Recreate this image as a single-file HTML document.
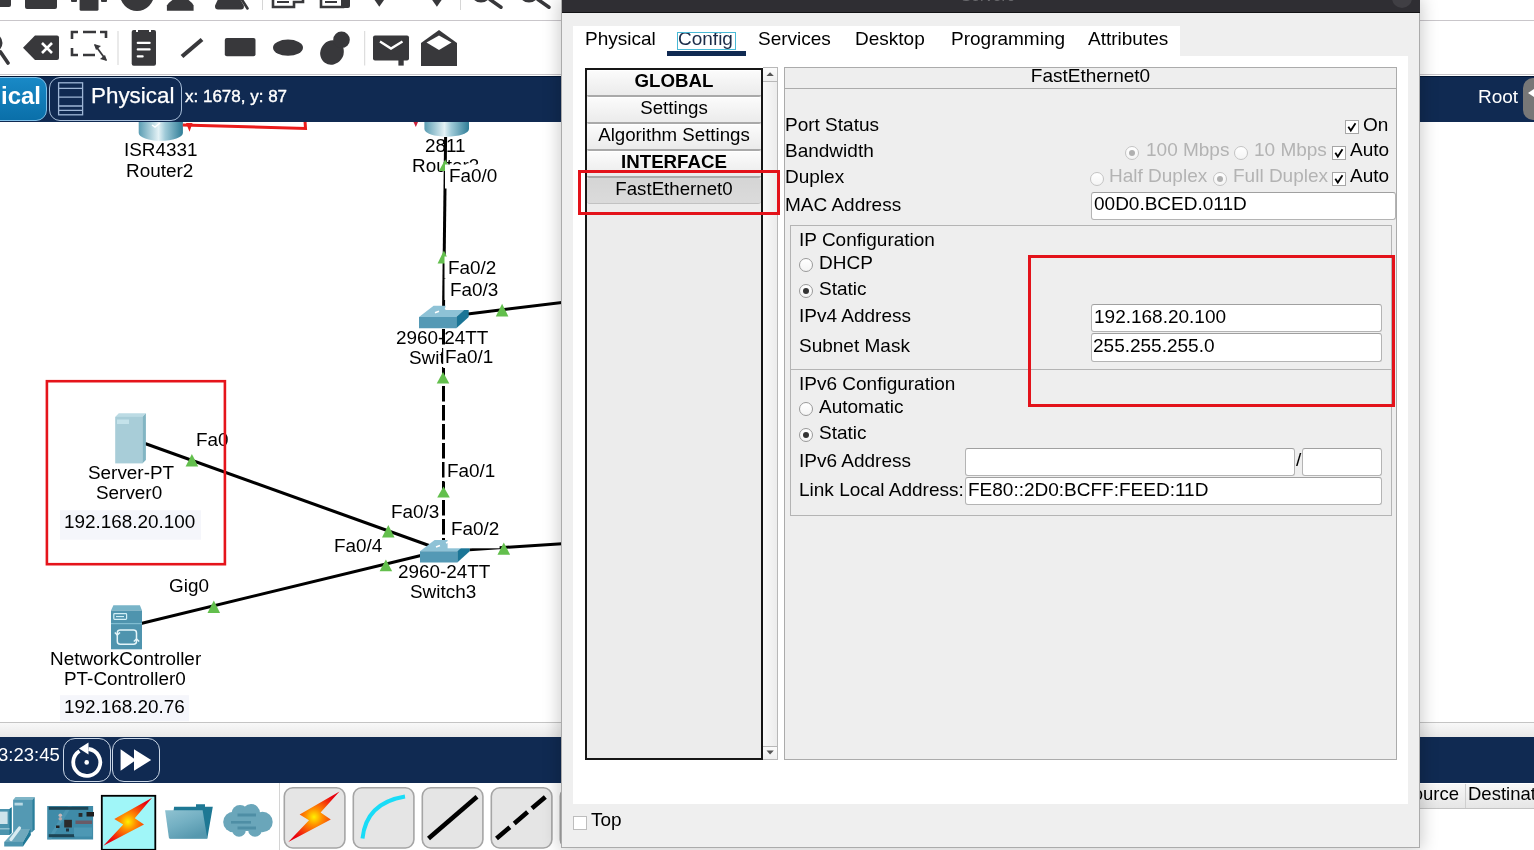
<!DOCTYPE html>
<html><head><meta charset="utf-8">
<style>
*{box-sizing:border-box}
html,body{margin:0;padding:0}
body{width:1534px;height:850px;overflow:hidden;position:relative;background:#fff;font-family:"Liberation Sans",sans-serif;color:#000}
.a{position:absolute}
.t{position:absolute;white-space:pre;line-height:1;will-change:transform}
</style></head><body>
<div class="a" style="left:0px;top:20px;width:1534px;height:1px;background:#c9c6ca"></div>
<div class="a" style="left:0px;top:74px;width:1534px;height:1px;background:#c9c6ca"></div>
<div class="a" style="left:0px;top:76px;width:1534px;height:46px;background:#102a52;border-top:1px solid #021634"></div>
<div class="a" style="left:0px;top:722px;width:1534px;height:1px;background:#c4c4c4"></div>
<div class="a" style="left:0px;top:723px;width:1534px;height:14px;background:linear-gradient(#f8f8f8,#e9e9e9)"></div>
<div class="a" style="left:0px;top:737px;width:1534px;height:46px;background:#102a52"></div>
<svg class="a" style="left:0;top:0" width="562" height="76" viewBox="0 0 562 76"><rect x="-4" y="-6" width="15" height="13" rx="2" fill="#38383b"/><rect x="25" y="-6" width="32" height="15" rx="2" fill="#38383b"/><rect x="79.6" y="-6" width="18.9" height="16.7" rx="1.5" fill="#38383b"/><rect x="71" y="-3" width="6" height="5" rx="1" fill="#38383b"/><rect x="101" y="-3" width="6" height="5" rx="1" fill="#38383b"/><circle cx="137" cy="-6" r="17" fill="#38383b"/><rect x="135" y="-6" width="3" height="4" fill="#fff"/><path d="M174 -1 H187 Q192 2 193.6 5.5 V10.7 H166.9 V5.5 Q169 2 174 -1 Z" fill="#38383b"/><path d="M219 -3 H239 L243.8 5.5 Q244.5 9.4 241 9.4 H218 Q214.5 9.4 215.1 5.5 Z" fill="#38383b"/><path d="M241.5 -1 L247.5 8.5" stroke="#38383b" stroke-width="2.6" stroke-linecap="round"/><rect x="262" y="-2" width="1" height="12" fill="#d6d6d6"/><path d="M273 -4 V7 H294 V2 H303 V-4" fill="none" stroke="#38383b" stroke-width="2.6"/><rect x="277" y="1" width="12" height="2" fill="#38383b"/><path d="M321 -4 V7 H343 V-4" fill="none" stroke="#38383b" stroke-width="2.6"/><rect x="341" y="-4" width="9" height="12" rx="2" fill="#38383b"/><rect x="325" y="1" width="12" height="2" fill="#38383b"/><path d="M373.2 -2 L385.4 -2 L379.3 6.8 Z" fill="#38383b"/><path d="M430.8 -2 L443 -2 L436.9 6.8 Z" fill="#38383b"/><rect x="460" y="-2" width="1" height="12" fill="#d6d6d6"/><path d="M490 -0.5 L501 7.2" stroke="#38383b" stroke-width="3.5" stroke-linecap="round"/><circle cx="481" cy="-8" r="9" stroke="#38383b" stroke-width="3" fill="none"/><path d="M538 -0.5 L549 7.2" stroke="#38383b" stroke-width="3.5" stroke-linecap="round"/><circle cx="529" cy="-8" r="9" stroke="#38383b" stroke-width="3" fill="none"/><circle cx="-7" cy="43" r="8" fill="none" stroke="#38383b" stroke-width="3"/><path d="M0.5 52 L8 63" stroke="#38383b" stroke-width="3.6" stroke-linecap="round"/><path d="M23 47.8 L35 35.6 H57 Q59 35.6 59 37.6 V58 Q59 60 57 60 H35 Z" fill="#38383b"/><path d="M42 43 L52 53 M52 43 L42 53" stroke="#fff" stroke-width="2.6"/><path d="M72 39 V32 H78 M83 32 H96 M100 32 H106 V38 M72 48 V55 H78 M83 55 H95" fill="none" stroke="#38383b" stroke-width="2.6"/><path d="M95 45 L106 60" stroke="#38383b" stroke-width="1.8"/><path d="M94 44 L101 46 L96 50 Z M107 61 L100 59 L105 55 Z" fill="#38383b"/><rect x="117.5" y="31" width="1" height="34" fill="#d6d6d6"/><rect x="131.7" y="30" width="24.3" height="35.8" rx="2" fill="#38383b"/><rect x="136" y="29" width="2" height="3" fill="#fff"/><rect x="149" y="29" width="2" height="3" fill="#fff"/><rect x="136.7" y="41.8" width="14" height="2.2" rx="1" fill="#fff"/><rect x="136.7" y="48.2" width="14" height="2.2" rx="1" fill="#fff"/><rect x="136.7" y="55.3" width="7" height="2.2" rx="1" fill="#fff"/><path d="M182 56.5 L202 39.5" stroke="#38383b" stroke-width="4.2" stroke-linecap="butt"/><rect x="224.8" y="38" width="30.7" height="18.2" rx="2" fill="#38383b"/><ellipse cx="288" cy="47.7" rx="15" ry="8.1" fill="#38383b"/><ellipse cx="332" cy="52.5" rx="11.5" ry="12.5" transform="rotate(35 332 52.5)" fill="#38383b"/><circle cx="341.5" cy="39.8" r="8.3" fill="#38383b"/><rect x="364.2" y="31" width="1" height="34.5" fill="#d6d6d6"/><rect x="373" y="35.6" width="36" height="25" rx="2" fill="#38383b"/><rect x="398.4" y="59" width="5.3" height="6.6" fill="#38383b"/><path d="M380 41.5 L391 48.5 L402.5 41.5" fill="none" stroke="#fff" stroke-width="2.4"/><path d="M421 43 L439 30 L457 43 V66 H421 Z" fill="#38383b"/><path d="M426.5 42.5 L439 35.5 L451.5 42.5 L439 50 Z" fill="#fff"/></svg>
<div class="a" style="left:-14px;top:77px;width:61px;height:44px;border:1px solid #7fc0e8;border-radius:11px;background:linear-gradient(#1989c6,#0a6fa9)"></div>
<div class="t" style="left:0.6px;top:84.08px;font-size:24px;font-weight:bold;color:#fff;">ical</div>
<div class="a" style="left:49px;top:77px;width:133px;height:44px;border:1px solid #a9bfd9;border-radius:11px"></div>
<svg class="a" style="left:57px;top:81px" width="28" height="36" viewBox="57 81 28 36"><g fill="none" stroke="#9eb6d6" stroke-width="1.3"><rect x="58.6" y="82.8" width="24" height="32"/><path d="M58.6 88.4H82.6M58.6 97.1H82.6M58.6 106H82.6M58.6 110.4H82.6"/></g></svg>
<div class="t" style="left:90.6px;top:85.24px;font-size:22.4px;font-weight:normal;color:#fff;-webkit-text-stroke:0.25px #fff">Physical</div>
<div class="t" style="left:184.7px;top:88.21px;font-size:17px;font-weight:normal;color:#fff;-webkit-text-stroke:0.4px #fff">x: 1678, y: 87</div>
<div class="t" style="left:1478.4px;top:87.22px;font-size:19px;font-weight:normal;color:#fff;">Root</div>
<div class="a" style="left:1523px;top:78px;width:27px;height:42px;background:#777;border-radius:10px"></div>
<svg class="a" style="left:1526px;top:80px" width="8" height="24"><path d="M2 13 L14 5 V21 Z" fill="#fff"/></svg>
<div class="t" style="left:-1.6px;top:745.74px;font-size:18.5px;font-weight:normal;color:#fff;">3:23:45</div>
<div class="a" style="left:63px;top:738px;width:48px;height:44px;border:1px solid #c9d6e6;border-radius:12px"></div>
<div class="a" style="left:112px;top:738px;width:48px;height:44px;border:1px solid #c9d6e6;border-radius:12px"></div>
<svg class="a" style="left:63px;top:738px" width="100" height="44" viewBox="63 738 100 44"><path d="M79.5 751 A13.5 13.5 0 1 0 88.5 749" fill="none" stroke="#fff" stroke-width="3.8"/><path d="M88.5 742.5 L79 748.5 L88.5 754.5 Z" fill="#fff"/><circle cx="86.7" cy="762.4" r="2.3" fill="#fff"/><path d="M120.6 749.3 L136 760 L120.6 770.8 Z M134 749.3 L151.2 760 L134 770.8 Z" fill="#fff"/></svg>
<div class="t" style="left:123.9px;top:141.40px;font-size:18.9px;font-weight:normal;color:#000;">ISR4331</div>
<div class="t" style="left:126.4px;top:161.50px;font-size:18.9px;font-weight:normal;color:#000;">Router2</div>
<div class="t" style="left:424.7px;top:137.10px;font-size:18.9px;font-weight:normal;color:#000;">2811</div>
<div class="t" style="left:412.4px;top:157.10px;font-size:18.9px;font-weight:normal;color:#000;">Router3</div>
<div class="t" style="left:396.2px;top:329.30px;font-size:18.9px;font-weight:normal;color:#000;">2960-24TT</div>
<div class="t" style="left:408.6px;top:348.80px;font-size:18.9px;font-weight:normal;color:#000;">Switch1</div>
<div class="t" style="left:397.7px;top:563.10px;font-size:18.9px;font-weight:normal;color:#000;">2960-24TT</div>
<div class="t" style="left:409.6px;top:583.10px;font-size:18.9px;font-weight:normal;color:#000;">Switch3</div>
<div class="t" style="left:87.7px;top:464.00px;font-size:18.9px;font-weight:normal;color:#000;">Server-PT</div>
<div class="t" style="left:95.9px;top:484.00px;font-size:18.9px;font-weight:normal;color:#000;">Server0</div>
<div class="t" style="left:49.9px;top:650.30px;font-size:18.9px;font-weight:normal;color:#000;">NetworkController</div>
<div class="t" style="left:64.4px;top:670.20px;font-size:18.9px;font-weight:normal;color:#000;">PT-Controller0</div>
<svg class="a" style="left:0;top:122px" width="562" height="600" viewBox="0 122 562 600"><defs><linearGradient id="cyl" x1="0" x2="1" y1="0" y2="0"><stop offset="0" stop-color="#5a9db3"/><stop offset="0.45" stop-color="#e4f2f6"/><stop offset="0.6" stop-color="#9fcad8"/><stop offset="1" stop-color="#2f7d97"/></linearGradient><linearGradient id="srv" x1="0" x2="1"><stop offset="0" stop-color="#a9cfdb"/><stop offset="1" stop-color="#9cc4d1"/></linearGradient></defs><path d="M138.7 110 V133 A22.1 7.8 0 0 0 182.9 133 V110 Z" fill="url(#cyl)"/><path d="M152 125 l3 2 l5 -4" stroke="#fff" stroke-width="1.5" fill="none"/><path d="M424.4 110 V129 A22.3 7.7 0 0 0 469 129 V110 Z" fill="url(#cyl)"/><path d="M182.8 125 L305.5 128.5 L305 121" fill="none" stroke="#ea1b1b" stroke-width="3"/><path d="M186 123 L192.5 123 L189.5 131.7 Z" fill="#ea1b1b"/><path d="M413.5 122 L418 122 L415.8 127 Z" fill="#c8203a"/><path d="M445.6 137 L443.6 306" stroke="#000" stroke-width="3" fill="none"/><path d="M467.7 314 L562 302.4" stroke="#000" stroke-width="3" fill="none"/><path d="M443.5 329 L443.5 540" stroke="#000" stroke-width="3" stroke-dasharray="15.5 3.5" fill="none"/><path d="M145 443.5 L429 545.5" stroke="#000" stroke-width="3" fill="none"/><path d="M141 623.5 L423 555" stroke="#000" stroke-width="3" fill="none"/><path d="M469.4 549.7 L562 543.8" stroke="#000" stroke-width="3" fill="none"/><polygon points="419.0,317.0 433.6,305.8 468.7,305.8 456.3,317.0" fill="#8ec2d6"/><polygon points="419.0,317.0 456.3,317.0 456.3,328.3 419.0,328.3" fill="#5499b5"/><polygon points="456.3,317.0 468.7,305.8 468.7,317.1 456.3,328.3" fill="#1b7596"/><path d="M435 312.8 l4 -1.5 M445 308.8 l3 -1.5" stroke="#fff" stroke-width="1.6"/><polygon points="420.0,551.2 434.6,540.0 469.7,540.0 457.3,551.2" fill="#8ec2d6"/><polygon points="420.0,551.2 457.3,551.2 457.3,562.5 420.0,562.5" fill="#5499b5"/><polygon points="457.3,551.2 469.7,540.0 469.7,551.3 457.3,562.5" fill="#1b7596"/><path d="M436 547 l4 -1.5 M446 543 l3 -1.5" stroke="#fff" stroke-width="1.6"/><polygon points="115.2,416.9 118.8,413.2 145.9,413.2 142.4,416.9" fill="#bcdbe4"/><rect x="115.2" y="416.9" width="27.2" height="46.5" fill="#a8cdd8"/><polygon points="142.4,416.9 145.9,413.2 145.9,460 142.4,463.4" fill="#82b5c3"/><rect x="117" y="419.5" width="12" height="4.5" fill="#c4e2ea"/><polygon points="113.4,605.2 139.9,605.2 142,610.5 111,610.5" fill="#78b4c8"/><rect x="111" y="610.5" width="31" height="38.8" fill="#4f94ae"/><rect x="111" y="623" width="31" height="1.2" fill="#80bdd1"/><rect x="113.8" y="613.6" width="12.8" height="5.8" rx="0.8" fill="none" stroke="#d2eff7" stroke-width="1.2"/><rect x="116" y="616" width="8" height="1.1" fill="#d2eff7"/><rect x="117.3" y="629.9" width="19.2" height="14.3" rx="3" fill="none" stroke="#e6f6fa" stroke-width="1.5"/><path d="M114.8 632.5 L117.3 635 L120 632.5 M133.8 641.5 L136.5 639 L139.2 641.5" fill="none" stroke="#e6f6fa" stroke-width="1.5"/><path d="M445.2 159.5 L451.5 171.0 L438.9 171.0 Z" fill="#63bf4d"/><path d="M443.9 250.6 L450.2 263.5 L437.6 263.5 Z" fill="#63bf4d"/><path d="M502.1 303.8 L508.4 316.5 L495.8 316.5 Z" fill="#63bf4d"/><path d="M443.0 372.0 L449.3 383.5 L436.7 383.5 Z" fill="#63bf4d"/><path d="M443.5 486.5 L449.8 497.6 L437.2 497.6 Z" fill="#63bf4d"/><path d="M503.8 542.4 L510.1 554.7 L497.5 554.7 Z" fill="#63bf4d"/><path d="M191.9 454.0 L198.2 466.5 L185.6 466.5 Z" fill="#63bf4d"/><path d="M388.3 525.0 L394.6 537.4 L382.0 537.4 Z" fill="#63bf4d"/><path d="M385.9 559.6 L392.2 571.2 L379.6 571.2 Z" fill="#63bf4d"/><path d="M213.8 600.4 L220.1 612.9 L207.5 612.9 Z" fill="#63bf4d"/><rect x="445" y="164.5" width="56" height="24" fill="#fff"/><rect x="444.5" y="256.5" width="54" height="22" fill="#fff"/><rect x="444.5" y="279" width="55" height="21" fill="#fff"/><rect x="445.5" y="299" width="24" height="11" fill="#fff"/><rect x="443.2" y="346" width="52" height="22" fill="#fff"/><rect x="444.5" y="460" width="52" height="22" fill="#fff"/><rect x="447.6" y="517" width="52" height="31.3" fill="#fff"/><rect x="60" y="510.3" width="141" height="29.4" fill="#f5f6fb"/><rect x="60" y="695.2" width="129" height="26" fill="#f5f6fb"/></svg>
<div class="t" style="left:63.6px;top:513.00px;font-size:18.9px;font-weight:normal;color:#000;">192.168.20.100</div>
<div class="t" style="left:63.6px;top:698.00px;font-size:18.9px;font-weight:normal;color:#000;">192.168.20.76</div>
<div class="t" style="left:195.6px;top:431.10px;font-size:18.9px;font-weight:normal;color:#000;">Fa0</div>
<div class="t" style="left:169.0px;top:577.40px;font-size:18.9px;font-weight:normal;color:#000;">Gig0</div>
<div class="t" style="left:333.6px;top:537.00px;font-size:18.9px;font-weight:normal;color:#000;">Fa0/4</div>
<div class="t" style="left:391.4px;top:503.00px;font-size:18.9px;font-weight:normal;color:#000;">Fa0/3</div>
<div class="t" style="left:451.4px;top:519.80px;font-size:18.9px;font-weight:normal;color:#000;">Fa0/2</div>
<div class="t" style="left:447.2px;top:462.40px;font-size:18.9px;font-weight:normal;color:#000;">Fa0/1</div>
<div class="t" style="left:445.4px;top:348.10px;font-size:18.9px;font-weight:normal;color:#000;">Fa0/1</div>
<div class="t" style="left:447.7px;top:259.30px;font-size:18.9px;font-weight:normal;color:#000;">Fa0/2</div>
<div class="t" style="left:450.0px;top:281.00px;font-size:18.9px;font-weight:normal;color:#000;">Fa0/3</div>
<div class="t" style="left:448.8px;top:167.30px;font-size:18.9px;font-weight:normal;color:#000;">Fa0/0</div>
<svg class="a" style="left:40px;top:375px" width="195" height="196" viewBox="40 375 195 196"><rect x="46.9" y="381.2" width="178" height="183" fill="none" stroke="#e5141b" stroke-width="2.6"/></svg>
<div class="a" style="left:279px;top:783px;width:1px;height:67px;background:#d4d4d4"></div>
<svg class="a" style="left:0;top:783px" width="562" height="67" viewBox="0 783 562 67"><defs><radialGradient id="bg1" gradientUnits="userSpaceOnUse" cx="314" cy="817" r="27"><stop offset="0" stop-color="#fff000"/><stop offset="0.3" stop-color="#ff9000"/><stop offset="0.75" stop-color="#f32a0c"/><stop offset="1" stop-color="#e8000f"/></radialGradient><radialGradient id="bg2" gradientUnits="userSpaceOnUse" cx="128" cy="821.8" r="26"><stop offset="0" stop-color="#fff000"/><stop offset="0.3" stop-color="#ff9000"/><stop offset="0.75" stop-color="#f32a0c"/><stop offset="1" stop-color="#e8000f"/></radialGradient><linearGradient id="fold" x1="0" y1="0" x2="0.6" y2="1"><stop offset="0" stop-color="#8fc2d1"/><stop offset="0.5" stop-color="#74b0c3"/><stop offset="1" stop-color="#5698ae"/></linearGradient></defs><polygon points="13.1,799.9 15.5,797 34.7,797 32.1,799.9" fill="#7fb5c7"/><rect x="13.1" y="799.9" width="19" height="32.4" fill="#5499b3"/><polygon points="32.1,799.9 34.7,797 34.7,829.5 32.1,832.3" fill="#2a7f9c"/><rect x="14.5" y="802.7" width="8.3" height="2.8" fill="#b9d9e4"/><polygon points="-1,809 9.5,809 11.6,807.2 11.6,833 9.5,835 -1,835" fill="#4b93ad"/><polygon points="9.5,809 11.6,807.2 11.6,833 9.5,835" fill="#1f7896"/><rect x="-1" y="811.6" width="8.6" height="12.4" fill="#cfe4eb"/><rect x="-1" y="828" width="10.5" height="1.5" fill="#8fc0d0"/><polygon points="4.2,841.9 16.2,829 30.4,829 23,841.9" fill="#6fa9bd"/><rect x="4.2" y="841.9" width="18.8" height="4.6" fill="#4d94ae"/><polygon points="23,841.9 30.4,829 30.9,835 23,846.5" fill="#1f7896"/><path d="M11 839.5 L19.5 828" stroke="#d9ebf1" stroke-width="3.2" stroke-linecap="round"/><rect x="47.2" y="806" width="45.9" height="33.5" fill="#3f8ba8"/><path d="M47.2 839.5 L68 806 H72 L51 839.5 Z" fill="#5aa2bb" opacity="0.5"/><rect x="48.8" y="806.8" width="39.5" height="3" fill="#1d4454"/><rect x="48.8" y="834.2" width="25.8" height="3" fill="#1d4454"/><rect x="64.2" y="819.8" width="7.7" height="7.7" fill="#2b2b2b"/><rect x="78.6" y="813" width="3.8" height="3.8" fill="#2b2b2b"/><rect x="86.5" y="812" width="7.5" height="4.5" fill="#1e1e1e"/><rect x="75.5" y="820.5" width="16.5" height="3.5" fill="#6a5a66"/><rect x="74" y="827.5" width="18" height="9" fill="#4d98b4"/><circle cx="60.3" cy="815.3" r="1.8" fill="#c9b8b8"/><circle cx="60.3" cy="818.8" r="1.8" fill="#b8a8a8"/><rect x="56" y="825.5" width="3.5" height="2.5" fill="#222"/><rect x="66" y="828.5" width="3" height="3" fill="#1f3340"/><rect x="101.8" y="795.8" width="53.5" height="54" fill="#a0f6f8" stroke="#000" stroke-width="1.8"/><path d="M152.1 797.8 L114.3 818.9 L123.2 824.6 L103.4 845.8 L144 824.4 L134.8 818.2 Z" fill="url(#bg2)"/><polygon points="174.1,806.7 196,806.7 196,804.2 205,804.2 205,806.7 212.8,806.7 207.3,838.4 170,838.4" fill="#1e7894"/><polygon points="165.1,810.3 202.6,810.3 207.3,838.4 169,838.4" fill="url(#fold)"/><g fill="#6aa6ba"><circle cx="233.5" cy="822" r="10.3"/><circle cx="240" cy="813.5" r="8.5"/><circle cx="251" cy="813" r="9"/><circle cx="262.5" cy="822" r="10.2"/><circle cx="239" cy="830" r="6.8"/><circle cx="255" cy="830" r="6.8"/></g><rect x="229" y="816" width="38" height="15" fill="#6aa6ba"/><g fill="#4e8ea5"><rect x="237.5" y="813.5" width="18.5" height="3"/><rect x="231" y="821" width="20" height="2.6"/><rect x="237.5" y="826.5" width="18.5" height="3"/></g><rect x="284.3" y="787.8" width="60.6" height="60.2" rx="8.5" fill="#e5e5e5" stroke="#a5a5a5" stroke-width="1.6"/><rect x="353.3" y="787.8" width="60.6" height="60.2" rx="8.5" fill="#e5e5e5" stroke="#a5a5a5" stroke-width="1.6"/><rect x="422.3" y="787.8" width="60.6" height="60.2" rx="8.5" fill="#e5e5e5" stroke="#a5a5a5" stroke-width="1.6"/><rect x="491.3" y="787.8" width="60.6" height="60.2" rx="8.5" fill="#e5e5e5" stroke="#a5a5a5" stroke-width="1.6"/><rect x="560.3" y="787.8" width="60.6" height="60.2" rx="8.5" fill="#e5e5e5" stroke="#a5a5a5" stroke-width="1.6"/><path d="M339.5 791.6 L299.6 814.6 L309 820.3 L288.3 842.1 L330.8 819.5 L320.6 812.4 Z" fill="url(#bg1)"/><path d="M362.5 838.5 Q366 803 405 796.5" fill="none" stroke="#19dcf7" stroke-width="4"/><path d="M428.5 838.5 L477 796.8" stroke="#000" stroke-width="4.6"/><path d="M496.5 838.5 L545.5 796.8" stroke="#000" stroke-width="4.6" stroke-dasharray="17.5 5.8"/></svg>
<div class="a" style="left:1420px;top:783px;width:114px;height:26px;background:linear-gradient(#f7f7f7,#e6e6e6);border-bottom:1px solid #c4c4c4;border-top:1px solid #fff"></div>
<div class="a" style="left:1465px;top:784px;width:1px;height:24px;background:#cfcfcf"></div>
<div class="t" style="left:1300px;width:159px;text-align:right;top:784.94px;font-size:18.5px">Source</div>
<div class="t" style="left:1467.7px;top:784.94px;font-size:18.5px;font-weight:normal;color:#000;">Destination</div>
<div class="a" style="left:561px;top:0px;width:859px;height:848px;background:#efefef;border:1px solid #ababab;border-top:none;box-shadow:0 0 16px 2px rgba(0,0,0,0.2)"></div>
<div class="a" style="left:562px;top:0px;width:858px;height:13px;background:#2f2e33;border-bottom:1px solid #121214"></div>
<div class="a" style="left:1392px;top:-12px;width:20px;height:20px;background:#403f44;border-radius:10px"></div>
<div class="t" style="left:961.1px;top:-11.72px;font-size:15.5px;font-weight:normal;color:#6a6a6e;">Server0</div>
<div class="a" style="left:573px;top:26px;width:607px;height:30px;background:#fff"></div>
<div class="a" style="left:573px;top:56px;width:835px;height:748px;background:#fff"></div>
<div class="t" style="left:585.1px;top:29.12px;font-size:19px;font-weight:normal;color:#000;">Physical</div>
<div class="t" style="left:678.4px;top:29.12px;font-size:19px;font-weight:normal;color:#1b2b48;">Config</div>
<div class="t" style="left:757.6px;top:29.12px;font-size:19px;font-weight:normal;color:#000;">Services</div>
<div class="t" style="left:855.4px;top:29.12px;font-size:19px;font-weight:normal;color:#000;">Desktop</div>
<div class="t" style="left:950.5px;top:29.12px;font-size:19px;font-weight:normal;color:#000;">Programming</div>
<div class="t" style="left:1087.5px;top:29.12px;font-size:19px;font-weight:normal;color:#000;">Attributes</div>
<div class="a" style="left:677px;top:32px;width:59px;height:18px;border:1px solid #49b9d6"></div>
<div class="a" style="left:667px;top:51px;width:79px;height:5px;background:#102a52"></div>
<div class="a" style="left:585px;top:68px;width:178px;height:692px;background:#ececec;border:2px solid #161616"></div>
<div class="a" style="left:587px;top:70px;width:174px;height:27px;background:linear-gradient(#fbfbfb,#ebebeb);border-top:1px solid #fff;border-bottom:2px solid #a9a9a9;border-radius:2px"></div>
<div class="t" style="left:587px;width:174px;text-align:center;top:71.57px;font-size:18.7px;font-weight:bold">GLOBAL</div>
<div class="a" style="left:587px;top:97px;width:174px;height:27px;background:linear-gradient(#fbfbfb,#ebebeb);border-top:1px solid #fff;border-bottom:2px solid #a9a9a9;border-radius:2px"></div>
<div class="t" style="left:587px;width:174px;text-align:center;top:98.57px;font-size:18.7px;font-weight:normal">Settings</div>
<div class="a" style="left:587px;top:124px;width:174px;height:27px;background:linear-gradient(#fbfbfb,#ebebeb);border-top:1px solid #fff;border-bottom:2px solid #a9a9a9;border-radius:2px"></div>
<div class="t" style="left:587px;width:174px;text-align:center;top:125.57px;font-size:18.7px;font-weight:normal">Algorithm Settings</div>
<div class="a" style="left:587px;top:151px;width:174px;height:27px;background:linear-gradient(#fbfbfb,#ebebeb);border-top:1px solid #fff;border-bottom:2px solid #a9a9a9;border-radius:2px"></div>
<div class="t" style="left:587px;width:174px;text-align:center;top:152.57px;font-size:18.7px;font-weight:bold">INTERFACE</div>
<div class="a" style="left:587px;top:178px;width:174px;height:26px;background:linear-gradient(#d5d5d5,#dbdbdb);border-bottom:1px solid #c2c2c2;border-radius:3px"></div>
<div class="t" style="left:587px;width:174px;text-align:center;top:179.57px;font-size:18.7px;font-weight:normal">FastEthernet0</div>
<div class="a" style="left:763px;top:67px;width:15px;height:693px;background:linear-gradient(90deg,#fafafa,#ececec);border:1px solid #b8b8b8;border-left:none"></div>
<div class="a" style="left:763px;top:67px;width:15px;height:15px;background:linear-gradient(#fbfbfb,#efefef);border:1px solid #b8b8b8;border-left:none"></div>
<div class="a" style="left:763px;top:746px;width:15px;height:14px;background:linear-gradient(#fbfbfb,#efefef);border:1px solid #b8b8b8;border-left:none"></div>
<svg class="a" style="left:763px;top:68px" width="15" height="692"><path d="M3.5 8 L10.8 8 L7.1 4.2 Z" fill="#555"/><path d="M3.5 682.5 L10.8 682.5 L7.1 686.5 Z" fill="#555"/></svg>
<div class="a" style="left:578px;top:170px;width:202px;height:45px;border:3px solid #e3121a"></div>
<div class="a" style="left:784px;top:67px;width:613px;height:693px;background:#eeeeee;border:1px solid #ababab"></div>
<div class="a" style="left:785px;top:88px;width:611px;height:1px;background:#ababab"></div>
<div class="t" style="left:785px;width:611px;text-align:center;top:65.92px;font-size:19px">FastEthernet0</div>
<div class="t" style="left:784.6px;top:114.92px;font-size:19px;font-weight:normal;color:#000;">Port Status</div>
<div class="t" style="left:784.6px;top:140.92px;font-size:19px;font-weight:normal;color:#000;">Bandwidth</div>
<div class="t" style="left:784.6px;top:167.02px;font-size:19px;font-weight:normal;color:#000;">Duplex</div>
<div class="t" style="left:784.6px;top:194.52px;font-size:19px;font-weight:normal;color:#000;">MAC Address</div>
<div class="a" style="left:1345px;top:120px;width:13.5px;height:13.5px;border:1px solid #a6a6a6;background:#fff"></div>
<svg class="a" style="left:1345px;top:120px" width="14" height="14"><path d="M3.3 6.8 L5.8 10.6 L10.5 3.2" fill="none" stroke="#000" stroke-width="1.8"/></svg>
<div class="t" style="left:1363.3px;top:114.52px;font-size:19px;font-weight:normal;color:#000;">On</div>
<div class="a" style="left:1125px;top:146px;width:14px;height:14px;border-radius:7px;border:1px solid #c4c4c4;background:linear-gradient(#ffffff,#f4f4f4)"></div>
<div class="a" style="left:1129px;top:150px;width:6px;height:6px;border-radius:3px;background:#b0b0b0"></div>
<div class="t" style="left:1145.5px;top:140.32px;font-size:19px;font-weight:normal;color:#b3b3b3;">100 Mbps</div>
<div class="a" style="left:1234px;top:146px;width:14px;height:14px;border-radius:7px;border:1px solid #c4c4c4;background:linear-gradient(#ffffff,#f4f4f4)"></div>
<div class="t" style="left:1254.1px;top:140.32px;font-size:19px;font-weight:normal;color:#b3b3b3;">10 Mbps</div>
<div class="a" style="left:1332px;top:146px;width:13.5px;height:13.5px;border:1px solid #a6a6a6;background:#fff"></div>
<svg class="a" style="left:1332px;top:146px" width="14" height="14"><path d="M3.3 6.8 L5.8 10.6 L10.5 3.2" fill="none" stroke="#000" stroke-width="1.8"/></svg>
<div class="t" style="left:1350.4px;top:140.32px;font-size:19px;font-weight:normal;color:#000;">Auto</div>
<div class="a" style="left:1090px;top:172px;width:14px;height:14px;border-radius:7px;border:1px solid #c4c4c4;background:linear-gradient(#ffffff,#f4f4f4)"></div>
<div class="t" style="left:1109.4px;top:166.12px;font-size:19px;font-weight:normal;color:#b3b3b3;">Half Duplex</div>
<div class="a" style="left:1213px;top:172px;width:14px;height:14px;border-radius:7px;border:1px solid #c4c4c4;background:linear-gradient(#ffffff,#f4f4f4)"></div>
<div class="a" style="left:1217px;top:176px;width:6px;height:6px;border-radius:3px;background:#b0b0b0"></div>
<div class="t" style="left:1232.6px;top:166.12px;font-size:19px;font-weight:normal;color:#b3b3b3;">Full Duplex</div>
<div class="a" style="left:1332px;top:172px;width:13.5px;height:13.5px;border:1px solid #a6a6a6;background:#fff"></div>
<svg class="a" style="left:1332px;top:172px" width="14" height="14"><path d="M3.3 6.8 L5.8 10.6 L10.5 3.2" fill="none" stroke="#000" stroke-width="1.8"/></svg>
<div class="t" style="left:1350.4px;top:166.12px;font-size:19px;font-weight:normal;color:#000;">Auto</div>
<div class="a" style="left:1091px;top:192px;width:305px;height:28px;background:#fff;border:1px solid #b4b4b4;border-radius:3px;border-top-color:#a0a0a0"></div>
<div class="t" style="left:1093.7px;top:194.12px;font-size:19px;font-weight:normal;color:#000;">00D0.BCED.011D</div>
<div class="a" style="left:790px;top:225px;width:602px;height:145px;border:1px solid #b4b4b4;border-bottom:none"></div>
<div class="a" style="left:790px;top:369px;width:602px;height:147px;border:1px solid #b4b4b4"></div>
<div class="t" style="left:798.7px;top:230.22px;font-size:19px;font-weight:normal;color:#000;">IP Configuration</div>
<div class="a" style="left:799px;top:258px;width:14px;height:14px;border-radius:7px;border:1px solid #9a9a9a;background:linear-gradient(#ffffff,#f4f4f4)"></div>
<div class="t" style="left:819.3px;top:252.72px;font-size:19px;font-weight:normal;color:#000;">DHCP</div>
<div class="a" style="left:799px;top:284px;width:14px;height:14px;border-radius:7px;border:1px solid #9a9a9a;background:linear-gradient(#ffffff,#f4f4f4)"></div>
<div class="a" style="left:803px;top:288px;width:6px;height:6px;border-radius:3px;background:#333"></div>
<div class="t" style="left:819.3px;top:278.62px;font-size:19px;font-weight:normal;color:#000;">Static</div>
<div class="t" style="left:798.7px;top:306.32px;font-size:19px;font-weight:normal;color:#000;">IPv4 Address</div>
<div class="t" style="left:798.7px;top:335.52px;font-size:19px;font-weight:normal;color:#000;">Subnet Mask</div>
<div class="a" style="left:1091px;top:304px;width:291px;height:28px;background:#fff;border:1px solid #b4b4b4;border-radius:3px;border-top-color:#a0a0a0"></div>
<div class="t" style="left:1093.9px;top:306.52px;font-size:19px;font-weight:normal;color:#000;">192.168.20.100</div>
<div class="a" style="left:1091px;top:333px;width:291px;height:29px;background:#fff;border:1px solid #b4b4b4;border-radius:3px;border-top-color:#a0a0a0"></div>
<div class="t" style="left:1093.1px;top:335.82px;font-size:19px;font-weight:normal;color:#000;">255.255.255.0</div>
<div class="t" style="left:798.7px;top:374.12px;font-size:19px;font-weight:normal;color:#000;">IPv6 Configuration</div>
<div class="a" style="left:799px;top:402px;width:14px;height:14px;border-radius:7px;border:1px solid #9a9a9a;background:linear-gradient(#ffffff,#f4f4f4)"></div>
<div class="t" style="left:819.3px;top:396.52px;font-size:19px;font-weight:normal;color:#000;">Automatic</div>
<div class="a" style="left:799px;top:428px;width:14px;height:14px;border-radius:7px;border:1px solid #9a9a9a;background:linear-gradient(#ffffff,#f4f4f4)"></div>
<div class="a" style="left:803px;top:432px;width:6px;height:6px;border-radius:3px;background:#333"></div>
<div class="t" style="left:819.3px;top:422.72px;font-size:19px;font-weight:normal;color:#000;">Static</div>
<div class="t" style="left:798.7px;top:450.72px;font-size:19px;font-weight:normal;color:#000;">IPv6 Address</div>
<div class="t" style="left:798.7px;top:479.92px;font-size:19px;font-weight:normal;color:#000;">Link Local Address:</div>
<div class="a" style="left:965px;top:448px;width:330px;height:28px;background:#fff;border:1px solid #b4b4b4;border-radius:3px;border-top-color:#a0a0a0"></div>
<div class="t" style="left:1295.6px;top:450.42px;font-size:19px;font-weight:normal;color:#000;">/</div>
<div class="a" style="left:1302px;top:448px;width:80px;height:28px;background:#fff;border:1px solid #b4b4b4;border-radius:3px;border-top-color:#a0a0a0"></div>
<div class="a" style="left:965px;top:477px;width:417px;height:28px;background:#fff;border:1px solid #b4b4b4;border-radius:3px;border-top-color:#a0a0a0"></div>
<div class="t" style="left:967.6px;top:479.52px;font-size:19px;font-weight:normal;color:#000;">FE80::2D0:BCFF:FEED:11D</div>
<div class="a" style="left:1028px;top:255px;width:367px;height:152px;border:3px solid #e3121a"></div>
<div class="a" style="left:573px;top:816px;width:14px;height:14px;background:#fff;border:1px solid #bdbdbd"></div>
<div class="t" style="left:591.1px;top:810.12px;font-size:19px;font-weight:normal;color:#000;">Top</div>
</body></html>
